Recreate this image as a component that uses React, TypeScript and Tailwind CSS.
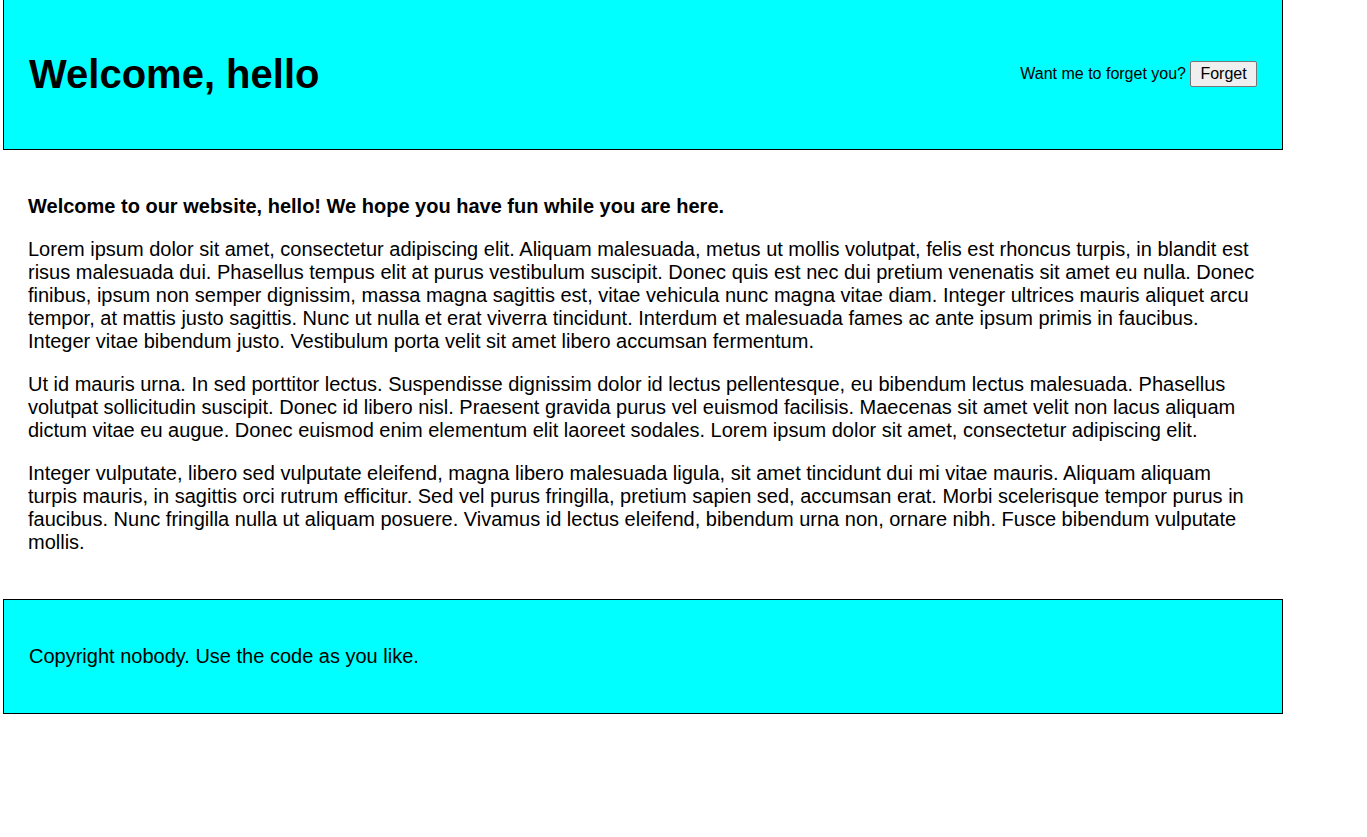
export default function App() {
  return (
    <div className="w-[1367px] min-h-[837px] bg-white text-black">
      <div className="ml-[3px] w-[1280px] font-['Liberation_Sans',Arial,sans-serif]">
        <header className="h-[150px] bg-[#00ffff] border-x border-b border-black px-[25px] flex items-center justify-between">
          <h1 className="text-[40px] font-bold leading-[46px] mb-[2px]">Welcome, hello</h1>
          <div className="flex items-center text-[16px] leading-[18px] mb-[1px]">
            <span>Want me to forget you?</span>
            <button className="ml-[4px] h-[26px] w-[67px] flex items-center justify-center border border-[#767676] bg-[#efefef] rounded-[2px] text-[16px] leading-[18px] text-black">
              Forget
            </button>
          </div>
        </header>
        <main className="px-[25px] py-[25px] text-[20px] leading-[23px]">
          <p className="font-bold my-[20px]">Welcome to our website, hello! We hope you have fun while you are here.</p>
          <p className="my-[20px]">
            Lorem ipsum dolor sit amet, consectetur adipiscing elit. Aliquam malesuada, metus ut mollis volutpat, felis est rhoncus turpis, in blandit est risus malesuada dui. Phasellus tempus elit at purus vestibulum suscipit. Donec quis est nec dui pretium venenatis sit amet eu nulla. Donec finibus, ipsum non semper dignissim, massa magna sagittis est, vitae vehicula nunc magna vitae diam. Integer ultrices mauris aliquet arcu tempor, at mattis justo sagittis. Nunc ut nulla et erat viverra tincidunt. Interdum et malesuada fames ac ante ipsum primis in faucibus. Integer vitae bibendum justo. Vestibulum porta velit sit amet libero accumsan fermentum.
          </p>
          <p className="my-[20px]">
            Ut id mauris urna. In sed porttitor lectus. Suspendisse dignissim dolor id lectus pellentesque, eu bibendum lectus malesuada. Phasellus volutpat sollicitudin suscipit. Donec id libero nisl. Praesent gravida purus vel euismod facilisis. Maecenas sit amet velit non lacus aliquam dictum vitae eu augue. Donec euismod enim elementum elit laoreet sodales. Lorem ipsum dolor sit amet, consectetur adipiscing elit.
          </p>
          <p className="my-[20px]">
            Integer vulputate, libero sed vulputate eleifend, magna libero malesuada ligula, sit amet tincidunt dui mi vitae mauris. Aliquam aliquam turpis mauris, in sagittis orci rutrum efficitur. Sed vel purus fringilla, pretium sapien sed, accumsan erat. Morbi scelerisque tempor purus in faucibus. Nunc fringilla nulla ut aliquam posuere. Vivamus id lectus eleifend, bibendum urna non, ornare nibh. Fusce bibendum vulputate mollis.
          </p>
        </main>
        <footer className="h-[115px] bg-[#00ffff] border border-black px-[25px] flex items-center text-[20px] leading-[23px]">
          <p>Copyright nobody. Use the code as you like.</p>
        </footer>
      </div>
    </div>
  );
}
